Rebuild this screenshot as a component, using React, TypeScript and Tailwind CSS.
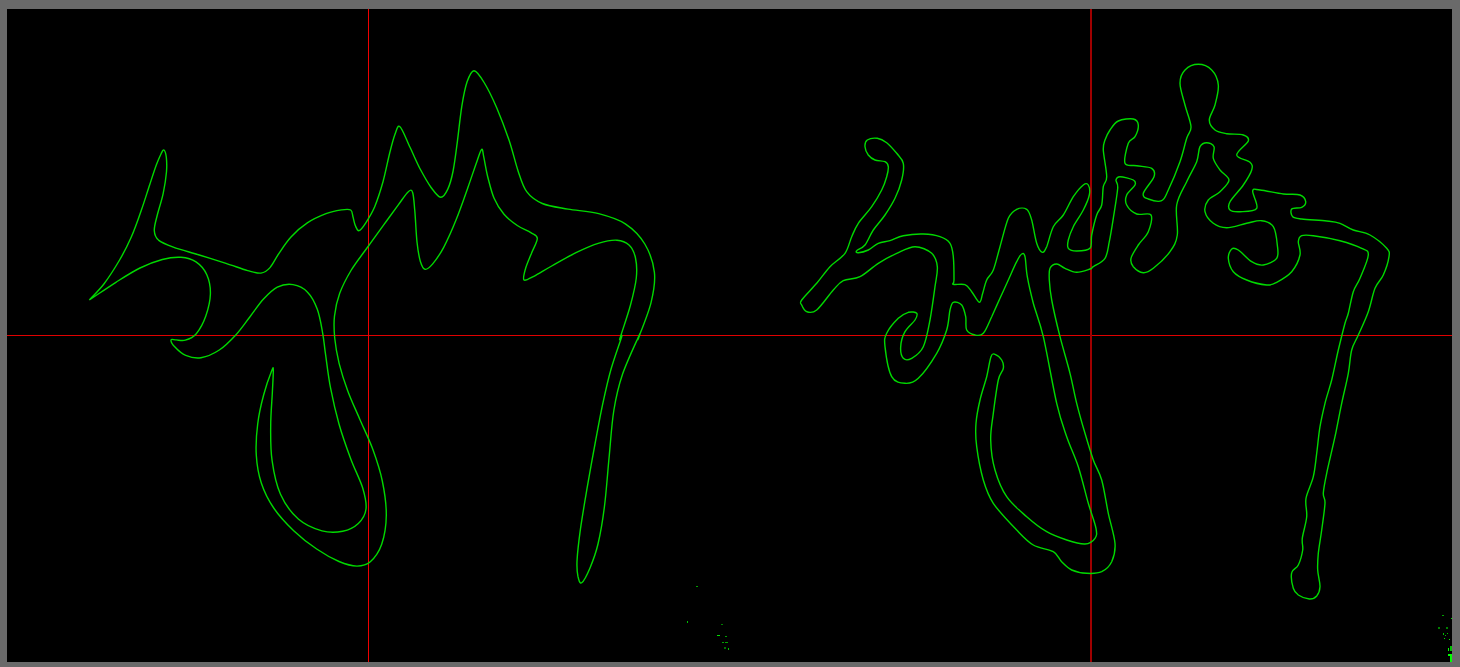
// Contour tracing output: two signatures with their centre cross lines
type Pt = [number, number];

// Points were read from zoomed crops (3x), so convert them back to page pixels
function crop(ox: number, oy: number, flat: number[]): Pt[] {
  const out: Pt[] = [];
  for (let i = 0; i < flat.length; i += 2) {
    out.push([flat[i] / 3 + ox, flat[i + 1] / 3 + oy]);
  }
  return out;
}

// Light smoothing for the hand read points, tips and sharp turns stay put
function relax(pts: Pt[]): Pt[] {
  return pts.map((p, i) => {
    if (i === 0 || i === pts.length - 1) return p;
    const a = pts[i - 1];
    const b = pts[i + 1];
    const ux = p[0] - a[0];
    const uy = p[1] - a[1];
    const vx = b[0] - p[0];
    const vy = b[1] - p[1];
    const cos = (ux * vx + uy * vy) / (Math.hypot(ux, uy) * Math.hypot(vx, vy) || 1);
    if (cos < 0.6) return p;
    return [p[0] * 0.6 + (a[0] + b[0]) * 0.2, p[1] * 0.6 + (a[1] + b[1]) * 0.2] as Pt;
  });
}

// Catmull-Rom through the points, as cubic beziers
function smooth(pts: Pt[], closed: boolean): string {
  const n = pts.length;
  const at = (i: number): Pt => (closed ? pts[(i + n) % n] : pts[Math.max(0, Math.min(n - 1, i))]);
  let d = `M${pts[0][0].toFixed(1)} ${pts[0][1].toFixed(1)}`;
  const last = closed ? n : n - 1;
  for (let i = 0; i < last; i++) {
    const p0 = at(i - 1);
    const p1 = at(i);
    const p2 = at(i + 1);
    const p3 = at(i + 2);
    const c1x = p1[0] + (p2[0] - p0[0]) / 6;
    const c1y = p1[1] + (p2[1] - p0[1]) / 6;
    const c2x = p2[0] - (p3[0] - p1[0]) / 6;
    const c2y = p2[1] - (p3[1] - p1[1]) / 6;
    d += `C${c1x.toFixed(1)} ${c1y.toFixed(1)} ${c2x.toFixed(1)} ${c2y.toFixed(1)} ${p2[0].toFixed(1)} ${p2[1].toFixed(1)}`;
  }
  return closed ? d + "Z" : d;
}

const leftShape: Pt[] = relax([
  ...crop(60, 50, [
    88, 750, 130, 710, 180, 630, 215, 565, 245, 480, 270, 400, 290, 340, 305, 305, 312, 300, 320, 315, 322, 360,
    312, 430, 290, 500, 278, 545, 290, 572, 330, 590, 420, 615, 500, 640, 570, 665, 605, 674, 630, 660, 655, 610,
    690, 560, 740, 515, 800, 488, 850, 477, 872, 480, 880, 500, 884, 530, 897, 542, 915, 525, 945, 475, 970, 400,
    990, 300, 1005, 245, 1020, 230,
  ]),
  ...crop(400, 50, [
    30, 290, 60, 360, 95, 420, 122, 442, 145, 425, 160, 370, 172, 280, 185, 160, 200, 85, 222, 62, 250, 85, 290, 170,
    330, 270, 355, 370, 375, 430, 420, 465, 500, 478, 600, 487, 680, 515, 740, 575, 772, 670, 760, 750, 715, 865,
  ]),
  ...crop(540, 320, [
    298, 45, 240, 170, 220, 260, 208, 400, 195, 570, 175, 680, 150, 750, 125, 788, 112, 775, 108, 730, 120, 630,
    140, 510, 165, 370, 190, 240, 210, 150, 245, 50,
  ]),
  ...crop(400, 50, [
    660, 865, 695, 760, 713, 680, 710, 620, 690, 580, 655, 566, 600, 575, 530, 605, 450, 650, 395, 685, 372, 690,
    372, 660, 395, 610, 412, 565, 400, 548, 350, 530, 310, 495, 280, 450, 262, 380, 250, 310, 245, 298, 235, 320,
    205, 410, 170, 510, 130, 600, 95, 650, 75, 658, 60, 640, 50, 590, 45, 470, 38, 428, 25, 425, 0, 458,
  ]),
  ...crop(60, 50, [970, 525, 925, 590, 870, 660, 835, 730, 820, 800]),
  ...crop(200, 300, [
    402, 110, 415, 190, 440, 270, 480, 360, 520, 445, 550, 540, 565, 650, 550, 740, 510, 795, 475, 802, 420, 790,
    350, 750, 280, 695, 215, 625, 180, 550, 165, 470, 170, 370, 190, 280, 215, 212, 220, 212, 218, 270, 210, 380,
    212, 480, 235, 590, 290, 665, 370, 700, 430, 698, 480, 675, 505, 630, 495, 570, 450, 480, 415, 370, 390, 270,
    375, 150,
  ]),
  ...crop(60, 50, [
    790, 860, 775, 770, 745, 720, 700, 698, 650, 705, 610, 745, 570, 800, 530, 855, 480, 905, 420, 930, 375, 920,
    340, 890, 333, 870, 345, 868, 375, 875, 410, 860, 440, 800, 457, 730, 445, 670, 410, 630, 365, 618, 310, 625,
    240, 650, 170, 695, 88, 750,
  ]),
]);

const rightShape: Pt[] = [
  ...crop(790, 120, [
    35, 540, 80, 490, 120, 440, 165, 400, 185, 350, 205, 310, 245, 260, 275, 210, 290, 170, 295, 140, 285, 125,
    255, 120, 235, 105, 225, 80, 232, 60, 262, 55, 290, 68, 320, 100, 340, 130, 335, 180, 315, 235, 285, 285,
    250, 330, 225, 375, 200, 392, 205, 398, 235, 390, 265, 370, 300, 362, 340, 347, 400, 342, 450, 350, 480, 370,
    490, 410, 492, 480, 490, 493, 525, 494, 545, 515, 568, 547, 578, 520, 590, 480, 610, 450, 630, 380, 655, 295,
    680, 268, 710, 268, 725, 300, 740, 370, 757, 397, 770, 380, 790, 320, 820, 285, 850, 230, 880, 195, 895, 195,
    898, 225, 880, 270, 850, 320, 835, 360, 835, 385, 860, 393, 900, 385, 905, 345, 920, 285, 935, 255, 940, 200,
    950, 170, 940, 90, 945, 60,
  ]),
  ...crop(1080, 55, [
    90, 225, 115, 198, 160, 192, 175, 210, 165, 245, 145, 265, 135, 325, 170, 332, 215, 340, 222, 365, 190, 415,
    205, 432, 245, 437, 265, 405, 300, 320, 320, 250, 333, 215, 315, 150, 300, 85, 315, 45, 355, 28, 395, 45,
    415, 90, 405, 150, 388, 195, 405, 225, 440, 236, 490, 240, 505, 258, 470, 300, 510, 322, 515, 345, 490, 390,
    450, 440, 450, 465, 480, 470, 530, 460, 518, 408, 540, 405, 610, 417, 660, 420, 677, 440, 665, 457, 635, 462,
    638, 485, 665, 492, 740, 498, 780, 505, 820, 525, 870, 540, 920, 580, 927, 605, 910, 660, 885, 700, 865, 770,
  ]),
  ...crop(1270, 300, [
    265, 105, 245, 150, 235, 220, 215, 310, 195, 410, 170, 520, 160, 580, 165, 610, 155, 690, 145, 760, 143, 810,
    150, 860, 140, 888, 118, 897, 85, 885, 70, 865, 65, 818, 85, 795, 98, 750, 97, 715, 110, 650, 108, 595, 130, 530,
    140, 460, 150, 380, 165, 310, 185, 240, 205, 150, 225, 70,
  ]),
  ...crop(1080, 55, [
    805, 775, 820, 710, 840, 670, 865, 600, 845, 580, 780, 557, 700, 542, 665, 542, 655, 560, 660, 600, 635, 650,
    590, 682, 560, 690, 500, 675, 460, 650, 445, 610, 455, 582, 475, 585, 515, 620, 550, 630, 590, 610, 592, 570,
    580, 515, 545, 497, 500, 505, 440, 518, 400, 505, 375, 470, 385, 435, 420, 410, 447, 375, 420, 345, 400, 310,
    402, 275, 380, 263, 360, 275, 350, 320, 320, 380, 290, 450, 292, 540, 270, 590, 220, 640, 190, 653, 160, 635,
    153, 610, 175, 570, 205, 530, 213, 480, 170, 477, 140, 450, 140, 420, 165, 390, 160, 375, 120, 365, 108, 375,
    113, 400, 100, 490, 88, 560, 75, 610, 40, 635,
  ]),
  ...crop(790, 120, [900, 447, 860, 457, 825, 445, 800, 432, 780, 445, 778, 480, 785, 540, 810, 650]),
  ...crop(960, 340, [
    330, 100, 350, 190, 375, 280, 400, 360, 425, 420, 445, 520, 465, 610, 455, 665, 425, 695, 380, 700, 335, 690,
    305, 665, 280, 635, 220, 615, 170, 570, 100, 490, 70, 420, 50, 320, 48, 250, 60, 180, 80, 110, 93, 50, 105, 43,
    125, 60, 130, 85, 115, 120, 100, 220, 92, 300, 105, 390, 140, 470, 200, 530, 260, 575, 320, 600, 375, 612,
    405, 595, 408, 565, 385, 490, 355, 380, 320, 290, 290, 190,
  ]),
  ...crop(790, 120, [
    760, 650, 730, 550, 712, 470, 705, 410, 695, 402, 680, 425, 655, 480, 630, 535, 605, 590, 580, 640, 555, 645,
    530, 630, 527, 590, 515, 555, 490, 547, 480, 570, 470, 630, 440, 700, 385, 775, 345, 790, 305, 770, 285, 680,
    290, 640, 325, 595, 355, 577, 380, 580, 375, 600, 345, 635, 332, 680, 340, 715, 365, 715, 400, 680, 420, 600,
    435, 500, 442, 440, 425, 400, 375, 380, 320, 400, 265, 430, 210, 470, 160, 482, 130, 510, 80, 570, 50, 575,
    35, 555,
  ]),
];

// x, y, w, h, colour
const specks: [number, number, number, number, string][] = [
  [696, 586, 2, 1, "#00a000"],
  [687, 621, 1, 2, "#00c000"],
  [721, 624, 2, 1, "#008000"],
  [717, 635, 3, 1, "#00e000"],
  [725, 636, 2, 1, "#00a000"],
  [722, 642, 2, 1, "#00a000"],
  [725, 642, 3, 1, "#00a000"],
  [724, 647, 2, 2, "#007000"],
  [728, 648, 1, 2, "#00c000"],
  [1442, 615, 2, 1, "#00a000"],
  [1451, 618, 1, 1, "#00e000"],
  [1438, 627, 2, 2, "#008000"],
  [1446, 627, 2, 2, "#008000"],
  [1443, 633, 1, 2, "#00c000"],
  [1447, 633, 1, 1, "#00c000"],
  [1445, 635, 1, 1, "#00c000"],
  [1444, 638, 1, 1, "#00e000"],
  [1449, 639, 1, 1, "#00e000"],
  [1450, 646, 2, 5, "#00c000"],
  [1448, 648, 1, 3, "#00ff00"],
  [1448, 654, 4, 2, "#00ff00"],
  [1450, 655, 2, 7, "#00ff00"],
];

export default function App() {
  return (
    <div className="flex h-screen w-full bg-[#6a6a6a] pt-[9px] pr-[8px] pb-[5px] pl-[7px]">
      <div className="flex-1 bg-black">
        <svg className="block" width={1445} height={653} viewBox="7 9 1445 653" fill="none">
          <g shapeRendering="crispEdges">
            <rect x={7} y={335} width={1445} height={1} fill="#e00000" />
            <rect x={368} y={9} width={1} height={653} fill="#f00000" />
            <rect x={1090} y={9} width={2} height={653} fill="#a00000" />
          </g>
          <path d={smooth(leftShape, false)} stroke="#00d800" strokeWidth={1.4} strokeLinejoin="round" />
          <path d={smooth(rightShape, true)} stroke="#00d800" strokeWidth={1.4} strokeLinejoin="round" />
          <g shapeRendering="crispEdges">
            {specks.map(([x, y, w, h, c], i) => (
              <rect key={i} x={x} y={y} width={w} height={h} fill={c} />
            ))}
          </g>
        </svg>
      </div>
    </div>
  );
}
